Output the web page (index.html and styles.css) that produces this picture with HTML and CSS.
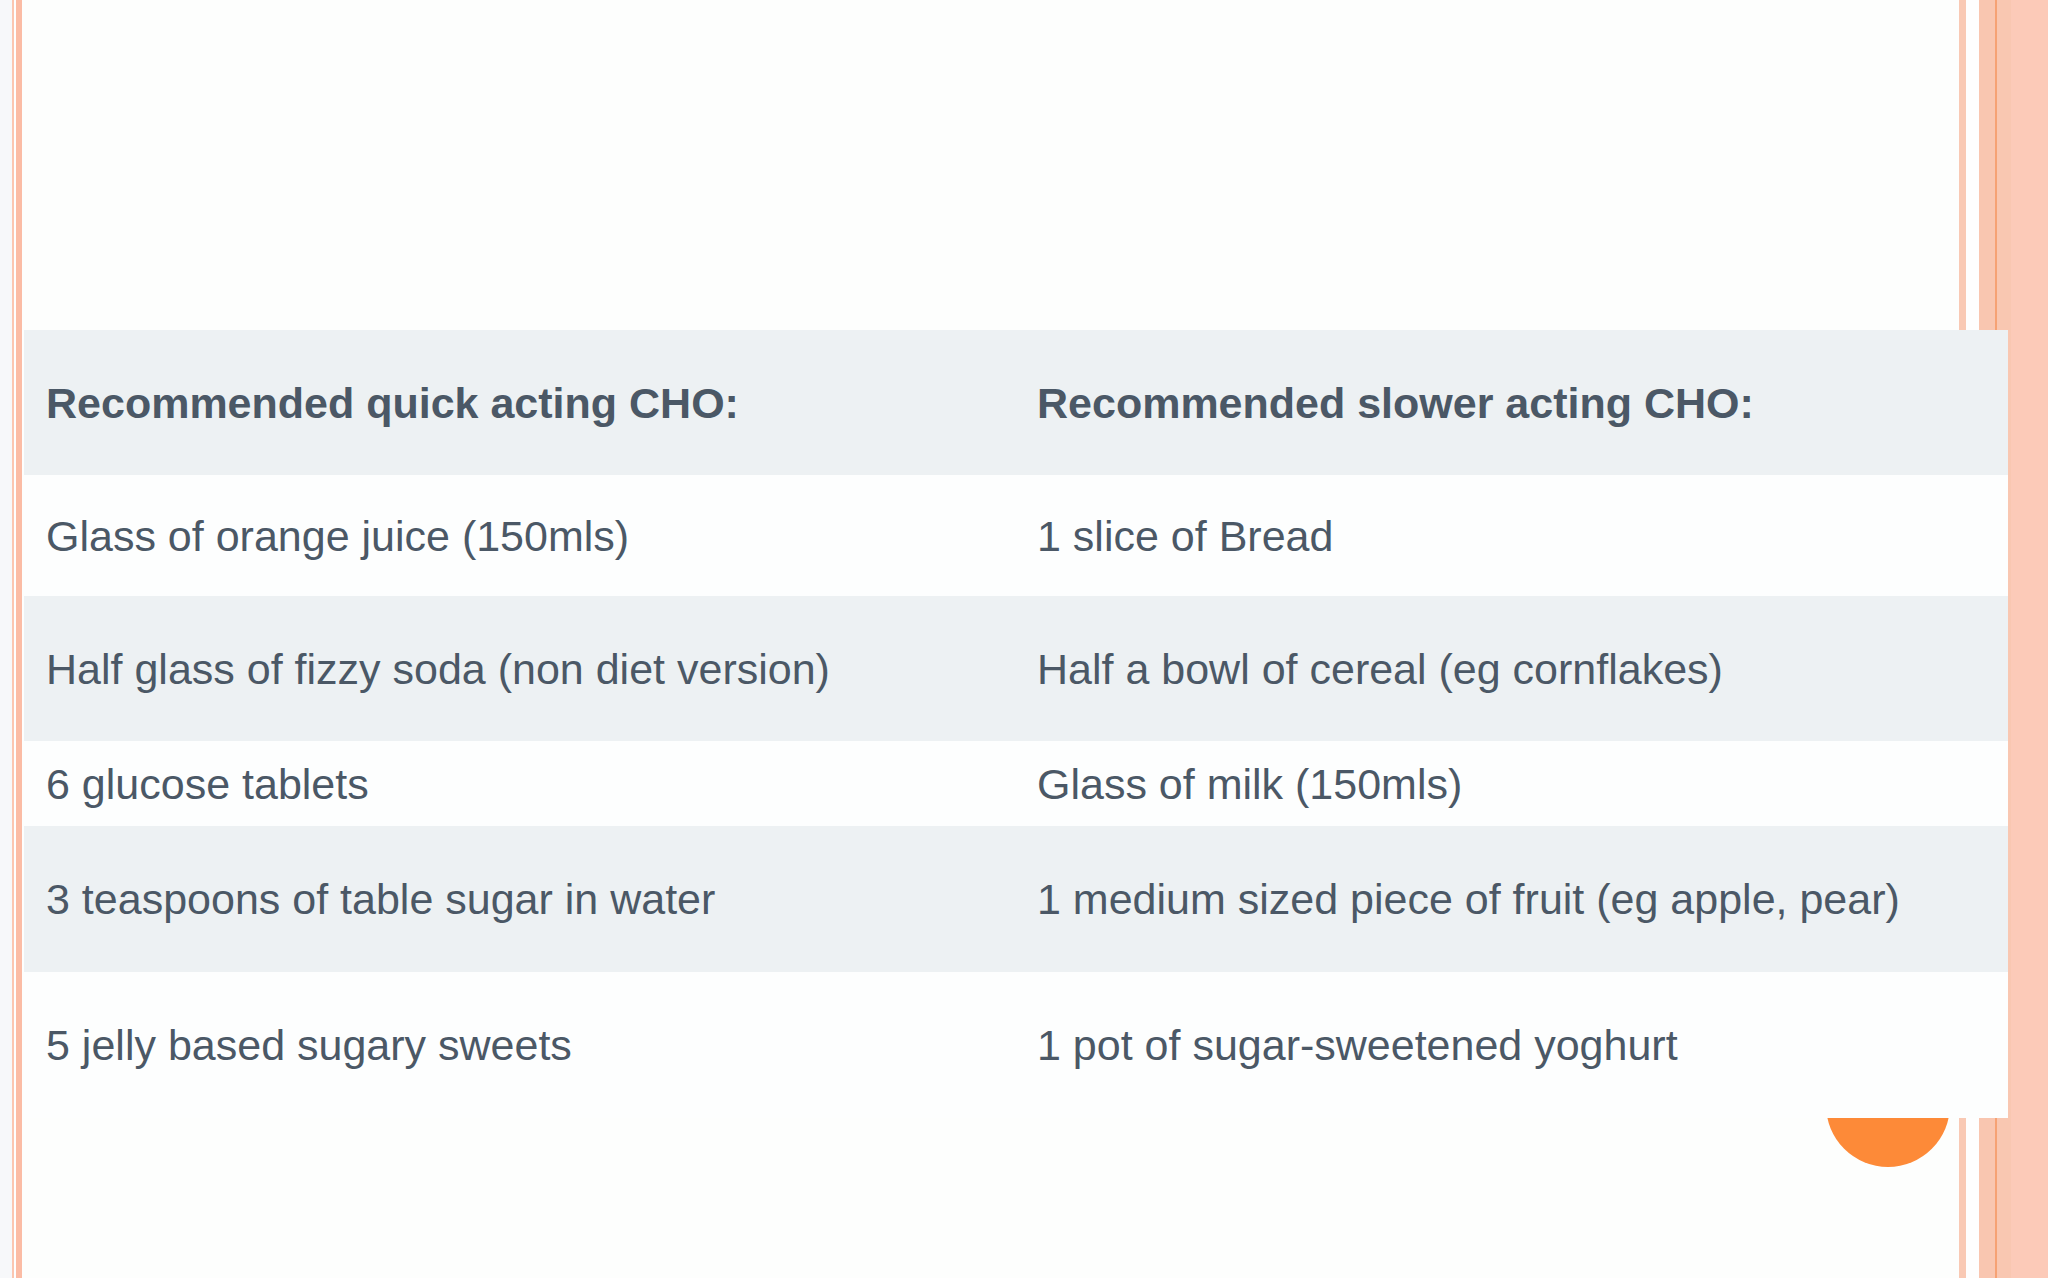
FILE: index.html
```html
<!DOCTYPE html>
<html lang="en">
<head>
<meta charset="utf-8">
<title>Recommended CHO</title>
<link rel="stylesheet" href="styles.css">
</head>
<body>
<div class="slide">
  <div class="dot"></div>
  <div class="cho-table">
    <div class="row head gray">
      <div class="cell">Recommended quick acting CHO:</div>
      <div class="cell">Recommended slower acting CHO:</div>
    </div>
    <div class="row r1 white">
      <div class="cell">Glass of orange juice (150mls)</div>
      <div class="cell">1 slice of Bread</div>
    </div>
    <div class="row r2 gray">
      <div class="cell">Half glass of fizzy soda (non diet version)</div>
      <div class="cell">Half a bowl of cereal (eg cornflakes)</div>
    </div>
    <div class="row r3 white">
      <div class="cell">6 glucose tablets</div>
      <div class="cell">Glass of milk (150mls)</div>
    </div>
    <div class="row r4 gray">
      <div class="cell">3 teaspoons of table sugar in water</div>
      <div class="cell">1 medium sized piece of fruit (eg apple, pear)</div>
    </div>
    <div class="row r5 white">
      <div class="cell">5 jelly based sugary sweets</div>
      <div class="cell">1 pot of sugar-sweetened yoghurt</div>
    </div>
  </div>
</div>
</body>
</html>
```

FILE: styles.css
```css
html, body {
  margin: 0;
  padding: 0;
}

body {
  width: 2048px;
  height: 1278px;
  overflow: hidden;
  font-family: "Liberation Sans", Arial, sans-serif;
}

.slide {
  position: relative;
  width: 2048px;
  height: 1278px;
  padding-top: 330px;
  box-sizing: border-box;
  background: linear-gradient(to right,
    #f7f8fa 0 12px,
    #fbc6b1 12px 14px,
    #fefefe 14px 16px,
    #fbbca5 16px 22px,
    #fdfefd 22px 1959px,
    #f9c9b4 1959px 1966px,
    #fefefe 1966px 1979px,
    #f9c6b0 1979px 1995px,
    #f6a274 1995px 1997px,
    #f9c7b1 1997px 2011px,
    #fccab8 2011px 2048px);
}

.dot {
  position: absolute;
  left: 1826px;
  top: 1043px;
  width: 124px;
  height: 124px;
  border-radius: 50%;
  background: #fd8a38;
  z-index: 0;
}

.cho-table {
  position: relative;
  z-index: 1;
  margin-left: 24px;
  width: 1984px;
  display: flex;
  flex-direction: column;
}

.row {
  display: grid;
  grid-template-columns: 991px 1fr;
  align-items: center;
}

.gray { background: #edf1f3; }
.white { background: #fdfefe; }

.head { height: 145px; font-weight: bold; }
.r1 { height: 121px; }
.r2 { height: 145px; }
.r3 { height: 85px; }
.r4 { height: 146px; }
.r5 { height: 146px; }

.cell {
  padding-left: 22px;
  font-size: 43px;
  line-height: 50px;
  color: #4b5866;
  white-space: nowrap;
}
```
